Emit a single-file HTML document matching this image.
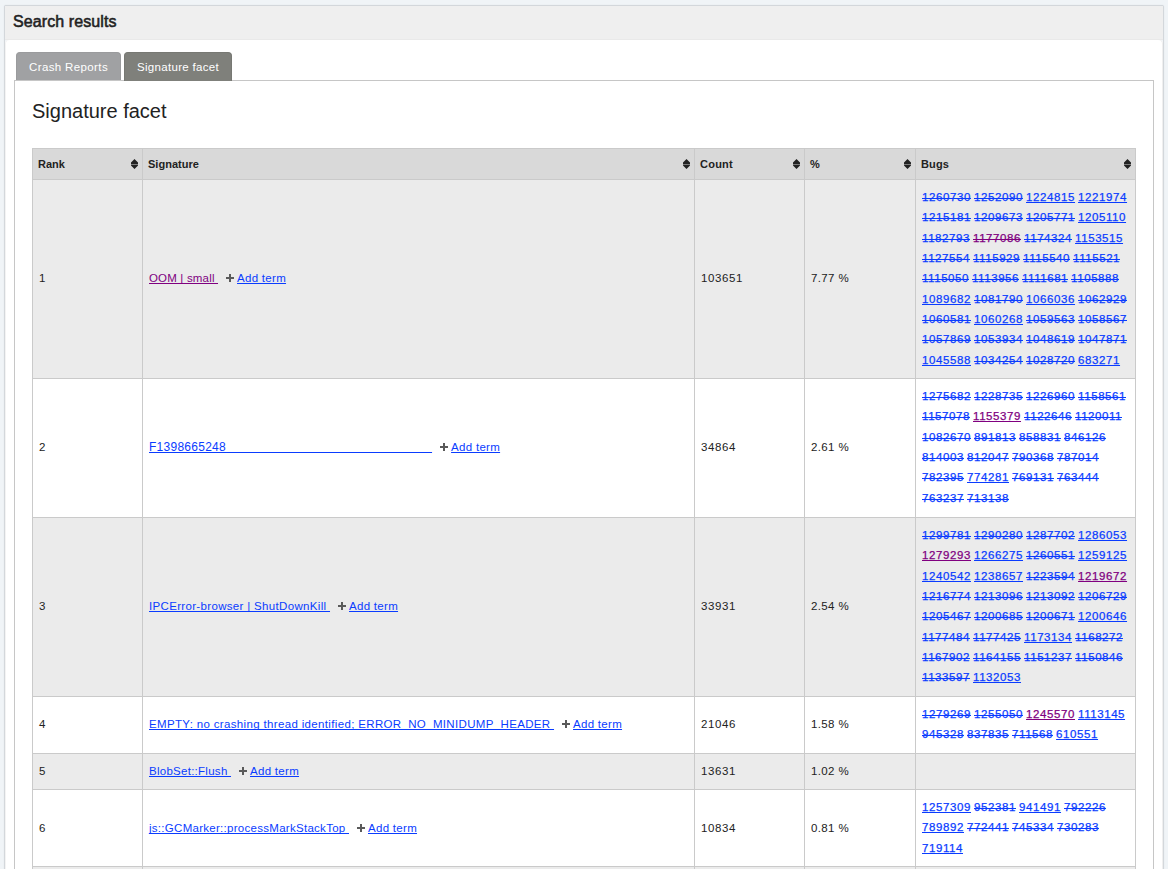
<!DOCTYPE html>
<html><head><meta charset="utf-8"><style>
html,body{margin:0;padding:0}
body{width:1168px;height:869px;overflow:hidden;position:relative;background:#f0f4f7;font-family:"Liberation Sans",sans-serif;color:#222}
#panel{position:absolute;left:4px;top:5px;width:1158px;height:900px;border:1px solid #d3d7db;border-radius:2px 2px 0 0;box-shadow:0 0 1px rgba(120,130,140,0.25);background:#f0f4f7}
#phead{position:absolute;left:0;top:0;width:1158px;height:34px;background:#efefef;box-shadow:inset 0 -1px 0 #e9e9e9}
#phead h2{position:absolute;left:8px;top:8px;margin:0;font-size:16px;line-height:16px;font-weight:normal;letter-spacing:0.1px;-webkit-text-stroke:0.55px #222;color:#222}
#pbody{position:absolute;left:0;top:34px;width:1158px;height:900px;background:#fff;border-radius:4px 4px 0 0;box-shadow:inset 1px 0 0 #f3f3f3,inset -1px 0 0 #efefef}
.tab{position:absolute;top:12px;height:27px;border:1px solid transparent;border-bottom:0;border-radius:4px 4px 0 0;color:#fff;font-size:12px;line-height:12px;z-index:2}
.tab>span{position:absolute;top:8px;white-space:nowrap}
#tab1{left:11px;width:103px;background:#a0a1a3;border-color:#9a9b9d}
#tab2{left:119px;width:106px;height:28px;background:#7f807b;border-color:#777873}
#tabbox{position:absolute;left:9px;top:40px;width:1138px;height:900px;border:1px solid #c6c6c6;border-bottom:0;}
#tabbox h3{position:absolute;left:17px;top:20px;margin:0;font-size:20px;line-height:20px;font-weight:normal;color:#222}
table{position:absolute;left:17px;top:67px;border-collapse:collapse;table-layout:fixed;width:1103px}
th,td{border:1px solid #cacaca;padding:0 5px 0 6px;text-align:left;vertical-align:middle;overflow:hidden}
th{background:#d9d9d9;height:30px;font-size:11px;font-weight:bold;position:relative;padding-left:5px}
td{font-size:12px;line-height:20.375px}
tr.odd td{background:#ebebeb}
tr.even td{background:#fff}
a{color:#0a3cff;text-decoration:underline;text-decoration-skip-ink:none}
a.v{color:#800080}
a.s{text-decoration:none;background:linear-gradient(currentColor,currentColor) no-repeat 0 8px/100% 1px}
.sort{position:absolute;right:4px;top:10px;width:7px;height:10px}
.plus{display:inline-block;width:8px;height:8px;position:relative;vertical-align:0px}
.plus:before{content:"";position:absolute;left:0;top:3px;width:8px;height:2px;background:#5a5a5a}
.plus:after{content:"";position:absolute;left:3px;top:0;width:2px;height:8px;background:#5a5a5a}
td.bugs a{-webkit-text-stroke:0.25px currentColor}
td.bugs{word-spacing:-0.333px;padding-left:6px;padding-right:0;vertical-align:top;padding-top:6.8px}
</style></head><body>
<div id="panel">
<div id="phead"><h2>Search results</h2></div>
<div id="pbody">
<div class="tab" id="tab1"><span style="left:12px"><span style="font-size:11.5px;letter-spacing:0.374px">Crash Reports</span></span></div>
<div class="tab" id="tab2"><span style="left:12px"><span style="font-size:11.5px;letter-spacing:0.310px">Signature facet</span></span></div>
<div id="tabbox">
<h3>Signature facet</h3>

<table><colgroup><col style="width:110px"><col style="width:552px"><col style="width:110px"><col style="width:111px"><col style="width:220px"></colgroup>
<tr><th><span style="letter-spacing:0.025px">Rank</span><svg class="sort" viewBox="0 0 7 10"><path d="M3.5 0L7 3.5V5.25H0V3.5Z M0 5.75H7V6.5L3.5 10L0 6.5Z" fill="#222"/></svg></th><th><span style="letter-spacing:0.030px">Signature</span><svg class="sort" viewBox="0 0 7 10"><path d="M3.5 0L7 3.5V5.25H0V3.5Z M0 5.75H7V6.5L3.5 10L0 6.5Z" fill="#222"/></svg></th><th><span style="letter-spacing:0.247px">Count</span><svg class="sort" viewBox="0 0 7 10"><path d="M3.5 0L7 3.5V5.25H0V3.5Z M0 5.75H7V6.5L3.5 10L0 6.5Z" fill="#222"/></svg></th><th><span style="letter-spacing:0.219px">%</span><svg class="sort" viewBox="0 0 7 10"><path d="M3.5 0L7 3.5V5.25H0V3.5Z M0 5.75H7V6.5L3.5 10L0 6.5Z" fill="#222"/></svg></th><th><span style="letter-spacing:0.125px">Bugs</span><svg class="sort" viewBox="0 0 7 10"><path d="M3.5 0L7 3.5V5.25H0V3.5Z M0 5.75H7V6.5L3.5 10L0 6.5Z" fill="#222"/></svg></th></tr>
<tr class="odd" style="height:199px"><td style="vertical-align:top;padding-top:88px"><span style="font-size:11.5px;letter-spacing:0.604px">1</span></td><td style="vertical-align:top;padding-top:88px"><a class="v"><span style="font-size:11.5px;letter-spacing:0.177px">OOM | small </span></a><span class="plus" style="margin-left:8px"></span><a style="margin-left:3px"><span style="font-size:11.5px;letter-spacing:0.293px">Add term</span></a></td><td style="vertical-align:top;padding-top:88px"><span style="font-size:11.5px;letter-spacing:0.604px">103651</span></td><td style="vertical-align:top;padding-top:88px"><span style="font-size:11.5px;letter-spacing:0.366px">7.77 %</span></td><td class="bugs"><a class="s"><span style="font-size:11.5px;letter-spacing:0.604px">1260730</span></a> <a class="s"><span style="font-size:11.5px;letter-spacing:0.604px">1252090</span></a> <a><span style="font-size:11.5px;letter-spacing:0.604px">1224815</span></a> <a><span style="font-size:11.5px;letter-spacing:0.604px">1221974</span></a> <a class="s"><span style="font-size:11.5px;letter-spacing:0.604px">1215181</span></a> <a class="s"><span style="font-size:11.5px;letter-spacing:0.604px">1209673</span></a> <a class="s"><span style="font-size:11.5px;letter-spacing:0.604px">1205771</span></a> <a><span style="font-size:11.5px;letter-spacing:0.583px">1205110</span></a> <a class="s"><span style="font-size:11.5px;letter-spacing:0.583px">1182793</span></a> <a class="v s"><span style="font-size:11.5px;letter-spacing:0.583px">1177086</span></a> <a class="s"><span style="font-size:11.5px;letter-spacing:0.583px">1174324</span></a> <a><span style="font-size:11.5px;letter-spacing:0.583px">1153515</span></a> <a class="s"><span style="font-size:11.5px;letter-spacing:0.583px">1127554</span></a> <a class="s"><span style="font-size:11.5px;letter-spacing:0.562px">1115929</span></a> <a class="s"><span style="font-size:11.5px;letter-spacing:0.562px">1115540</span></a> <a class="s"><span style="font-size:11.5px;letter-spacing:0.562px">1115521</span></a> <a class="s"><span style="font-size:11.5px;letter-spacing:0.562px">1115050</span></a> <a class="s"><span style="font-size:11.5px;letter-spacing:0.562px">1113956</span></a> <a class="s"><span style="font-size:11.5px;letter-spacing:0.541px">1111681</span></a> <a class="s"><span style="font-size:11.5px;letter-spacing:0.583px">1105888</span></a> <a><span style="font-size:11.5px;letter-spacing:0.604px">1089682</span></a> <a class="s"><span style="font-size:11.5px;letter-spacing:0.604px">1081790</span></a> <a><span style="font-size:11.5px;letter-spacing:0.604px">1066036</span></a> <a class="s"><span style="font-size:11.5px;letter-spacing:0.604px">1062929</span></a> <a class="s"><span style="font-size:11.5px;letter-spacing:0.604px">1060581</span></a> <a><span style="font-size:11.5px;letter-spacing:0.604px">1060268</span></a> <a class="s"><span style="font-size:11.5px;letter-spacing:0.604px">1059563</span></a> <a class="s"><span style="font-size:11.5px;letter-spacing:0.604px">1058567</span></a> <a class="s"><span style="font-size:11.5px;letter-spacing:0.604px">1057869</span></a> <a class="s"><span style="font-size:11.5px;letter-spacing:0.604px">1053934</span></a> <a class="s"><span style="font-size:11.5px;letter-spacing:0.604px">1048619</span></a> <a class="s"><span style="font-size:11.5px;letter-spacing:0.604px">1047871</span></a> <a><span style="font-size:11.5px;letter-spacing:0.604px">1045588</span></a> <a class="s"><span style="font-size:11.5px;letter-spacing:0.604px">1034254</span></a> <a class="s"><span style="font-size:11.5px;letter-spacing:0.604px">1028720</span></a> <a><span style="font-size:11.5px;letter-spacing:0.604px">683271</span></a></td></tr>
<tr class="even" style="height:139px"><td style="vertical-align:top;padding-top:58px"><span style="font-size:11.5px;letter-spacing:0.604px">2</span></td><td style="vertical-align:top;padding-top:58px"><a><span style="letter-spacing:0.267px">F1398665248</span><span style="letter-spacing:1.817px">&nbsp;&nbsp;&nbsp;&nbsp;&nbsp;&nbsp;&nbsp;&nbsp;&nbsp;&nbsp;&nbsp;&nbsp;&nbsp;&nbsp;&nbsp;&nbsp;&nbsp;&nbsp;&nbsp;&nbsp;&nbsp;&nbsp;&nbsp;&nbsp;&nbsp;&nbsp;&nbsp;&nbsp;&nbsp;&nbsp;&nbsp;&nbsp;&nbsp;&nbsp;&nbsp;&nbsp;&nbsp;&nbsp;&nbsp;&nbsp;</span></a><span class="plus" style="margin-left:8px"></span><a style="margin-left:3px"><span style="font-size:11.5px;letter-spacing:0.293px">Add term</span></a></td><td style="vertical-align:top;padding-top:58px"><span style="font-size:11.5px;letter-spacing:0.604px">34864</span></td><td style="vertical-align:top;padding-top:58px"><span style="font-size:11.5px;letter-spacing:0.366px">2.61 %</span></td><td class="bugs"><a class="s"><span style="font-size:11.5px;letter-spacing:0.604px">1275682</span></a> <a class="s"><span style="font-size:11.5px;letter-spacing:0.604px">1228735</span></a> <a class="s"><span style="font-size:11.5px;letter-spacing:0.604px">1226960</span></a> <a class="s"><span style="font-size:11.5px;letter-spacing:0.583px">1158561</span></a> <a class="s"><span style="font-size:11.5px;letter-spacing:0.583px">1157078</span></a> <a class="v"><span style="font-size:11.5px;letter-spacing:0.583px">1155379</span></a> <a class="s"><span style="font-size:11.5px;letter-spacing:0.583px">1122646</span></a> <a class="s"><span style="font-size:11.5px;letter-spacing:0.562px">1120011</span></a> <a class="s"><span style="font-size:11.5px;letter-spacing:0.604px">1082670</span></a> <a class="s"><span style="font-size:11.5px;letter-spacing:0.604px">891813</span></a> <a class="s"><span style="font-size:11.5px;letter-spacing:0.604px">858831</span></a> <a class="s"><span style="font-size:11.5px;letter-spacing:0.604px">846126</span></a> <a class="s"><span style="font-size:11.5px;letter-spacing:0.604px">814003</span></a> <a class="s"><span style="font-size:11.5px;letter-spacing:0.604px">812047</span></a> <a class="s"><span style="font-size:11.5px;letter-spacing:0.604px">790368</span></a> <a class="s"><span style="font-size:11.5px;letter-spacing:0.604px">787014</span></a> <a class="s"><span style="font-size:11.5px;letter-spacing:0.604px">782395</span></a> <a><span style="font-size:11.5px;letter-spacing:0.604px">774281</span></a> <a class="s"><span style="font-size:11.5px;letter-spacing:0.604px">769131</span></a> <a class="s"><span style="font-size:11.5px;letter-spacing:0.604px">763444</span></a> <a class="s"><span style="font-size:11.5px;letter-spacing:0.604px">763237</span></a> <a class="s"><span style="font-size:11.5px;letter-spacing:0.604px">713138</span></a></td></tr>
<tr class="odd" style="height:179px"><td style="vertical-align:top;padding-top:78px"><span style="font-size:11.5px;letter-spacing:0.604px">3</span></td><td style="vertical-align:top;padding-top:78px"><a><span style="font-size:11.5px;letter-spacing:0.331px">IPCError-browser | ShutDownKill </span></a><span class="plus" style="margin-left:8px"></span><a style="margin-left:3px"><span style="font-size:11.5px;letter-spacing:0.293px">Add term</span></a></td><td style="vertical-align:top;padding-top:78px"><span style="font-size:11.5px;letter-spacing:0.604px">33931</span></td><td style="vertical-align:top;padding-top:78px"><span style="font-size:11.5px;letter-spacing:0.366px">2.54 %</span></td><td class="bugs"><a class="s"><span style="font-size:11.5px;letter-spacing:0.604px">1299781</span></a> <a class="s"><span style="font-size:11.5px;letter-spacing:0.604px">1290280</span></a> <a class="s"><span style="font-size:11.5px;letter-spacing:0.604px">1287702</span></a> <a><span style="font-size:11.5px;letter-spacing:0.604px">1286053</span></a> <a class="v"><span style="font-size:11.5px;letter-spacing:0.604px">1279293</span></a> <a><span style="font-size:11.5px;letter-spacing:0.604px">1266275</span></a> <a class="s"><span style="font-size:11.5px;letter-spacing:0.604px">1260551</span></a> <a><span style="font-size:11.5px;letter-spacing:0.604px">1259125</span></a> <a><span style="font-size:11.5px;letter-spacing:0.604px">1240542</span></a> <a><span style="font-size:11.5px;letter-spacing:0.604px">1238657</span></a> <a class="s"><span style="font-size:11.5px;letter-spacing:0.604px">1223594</span></a> <a class="v"><span style="font-size:11.5px;letter-spacing:0.604px">1219672</span></a> <a class="s"><span style="font-size:11.5px;letter-spacing:0.604px">1216774</span></a> <a class="s"><span style="font-size:11.5px;letter-spacing:0.604px">1213096</span></a> <a class="s"><span style="font-size:11.5px;letter-spacing:0.604px">1213092</span></a> <a class="s"><span style="font-size:11.5px;letter-spacing:0.604px">1206729</span></a> <a class="s"><span style="font-size:11.5px;letter-spacing:0.604px">1205467</span></a> <a class="s"><span style="font-size:11.5px;letter-spacing:0.604px">1200685</span></a> <a class="s"><span style="font-size:11.5px;letter-spacing:0.604px">1200671</span></a> <a><span style="font-size:11.5px;letter-spacing:0.604px">1200646</span></a> <a class="s"><span style="font-size:11.5px;letter-spacing:0.583px">1177484</span></a> <a class="s"><span style="font-size:11.5px;letter-spacing:0.583px">1177425</span></a> <a><span style="font-size:11.5px;letter-spacing:0.583px">1173134</span></a> <a class="s"><span style="font-size:11.5px;letter-spacing:0.583px">1168272</span></a> <a class="s"><span style="font-size:11.5px;letter-spacing:0.583px">1167902</span></a> <a class="s"><span style="font-size:11.5px;letter-spacing:0.583px">1164155</span></a> <a class="s"><span style="font-size:11.5px;letter-spacing:0.583px">1151237</span></a> <a class="s"><span style="font-size:11.5px;letter-spacing:0.583px">1150846</span></a> <a class="s"><span style="font-size:11.5px;letter-spacing:0.583px">1133597</span></a> <a><span style="font-size:11.5px;letter-spacing:0.583px">1132053</span></a></td></tr>
<tr class="even" style="height:57px"><td style="vertical-align:top;padding-top:17px"><span style="font-size:11.5px;letter-spacing:0.604px">4</span></td><td style="vertical-align:top;padding-top:17px"><a><span style="font-size:11.5px;letter-spacing:0.342px">EMPTY: no crashing thread identified; ERROR_NO_MINIDUMP_HEADER </span></a><span class="plus" style="margin-left:8px"></span><a style="margin-left:3px"><span style="font-size:11.5px;letter-spacing:0.293px">Add term</span></a></td><td style="vertical-align:top;padding-top:17px"><span style="font-size:11.5px;letter-spacing:0.604px">21046</span></td><td style="vertical-align:top;padding-top:17px"><span style="font-size:11.5px;letter-spacing:0.366px">1.58 %</span></td><td class="bugs"><a class="s"><span style="font-size:11.5px;letter-spacing:0.604px">1279269</span></a> <a class="s"><span style="font-size:11.5px;letter-spacing:0.604px">1255050</span></a> <a class="v"><span style="font-size:11.5px;letter-spacing:0.604px">1245570</span></a> <a><span style="font-size:11.5px;letter-spacing:0.562px">1113145</span></a> <a class="s"><span style="font-size:11.5px;letter-spacing:0.604px">945328</span></a> <a class="s"><span style="font-size:11.5px;letter-spacing:0.604px">837835</span></a> <a class="s"><span style="font-size:11.5px;letter-spacing:0.580px">711568</span></a> <a><span style="font-size:11.5px;letter-spacing:0.604px">610551</span></a></td></tr>
<tr class="odd" style="height:36px"><td style="vertical-align:top;padding-top:7px"><span style="font-size:11.5px;letter-spacing:0.604px">5</span></td><td style="vertical-align:top;padding-top:7px"><a><span style="font-size:11.5px;letter-spacing:0.268px">BlobSet::Flush </span></a><span class="plus" style="margin-left:8px"></span><a style="margin-left:3px"><span style="font-size:11.5px;letter-spacing:0.293px">Add term</span></a></td><td style="vertical-align:top;padding-top:7px"><span style="font-size:11.5px;letter-spacing:0.604px">13631</span></td><td style="vertical-align:top;padding-top:7px"><span style="font-size:11.5px;letter-spacing:0.366px">1.02 %</span></td><td class="bugs"></td></tr>
<tr class="even" style="height:77px"><td style="vertical-align:top;padding-top:28px"><span style="font-size:11.5px;letter-spacing:0.604px">6</span></td><td style="vertical-align:top;padding-top:28px"><a><span style="font-size:11.5px;letter-spacing:0.281px">js::GCMarker::processMarkStackTop </span></a><span class="plus" style="margin-left:8px"></span><a style="margin-left:3px"><span style="font-size:11.5px;letter-spacing:0.293px">Add term</span></a></td><td style="vertical-align:top;padding-top:28px"><span style="font-size:11.5px;letter-spacing:0.604px">10834</span></td><td style="vertical-align:top;padding-top:28px"><span style="font-size:11.5px;letter-spacing:0.366px">0.81 %</span></td><td class="bugs"><a><span style="font-size:11.5px;letter-spacing:0.604px">1257309</span></a> <a class="s"><span style="font-size:11.5px;letter-spacing:0.604px">952381</span></a> <a><span style="font-size:11.5px;letter-spacing:0.604px">941491</span></a> <a class="s"><span style="font-size:11.5px;letter-spacing:0.604px">792226</span></a> <a><span style="font-size:11.5px;letter-spacing:0.604px">789892</span></a> <a class="s"><span style="font-size:11.5px;letter-spacing:0.604px">772441</span></a> <a class="s"><span style="font-size:11.5px;letter-spacing:0.604px">745334</span></a> <a class="s"><span style="font-size:11.5px;letter-spacing:0.604px">730283</span></a> <a><span style="font-size:11.5px;letter-spacing:0.580px">719114</span></a></td></tr>
<tr class="odd" style="height:60px"><td style="vertical-align:top;padding-top:19px"></td><td style="vertical-align:top;padding-top:19px"></td><td style="vertical-align:top;padding-top:19px"></td><td style="vertical-align:top;padding-top:19px"></td><td class="bugs"></td></tr>
</table>
</div></div></div>
</body></html>
